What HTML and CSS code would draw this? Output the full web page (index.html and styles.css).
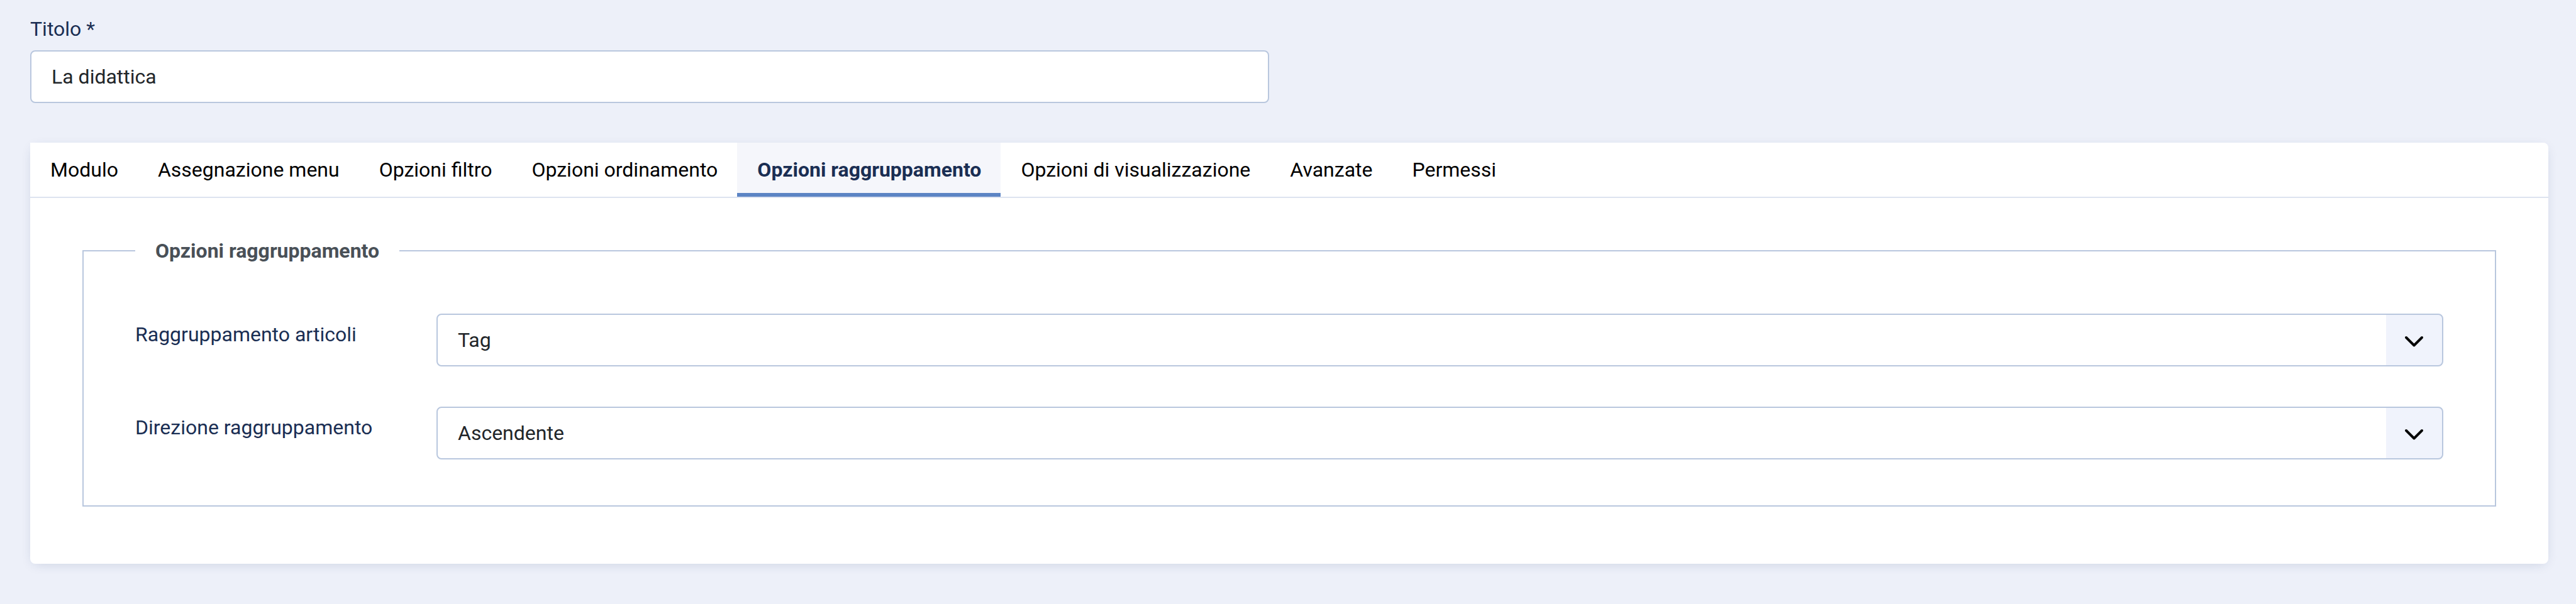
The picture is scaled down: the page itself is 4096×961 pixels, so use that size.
FILE: index.html
```html
<!DOCTYPE html>
<html lang="it">
<head>
<meta charset="utf-8">
<title>La didattica</title>
<link rel="stylesheet" href="styles.css">
</head>
<body>
<form class="page">
  <div class="title-row">
    <div class="title-field">
      <label for="title">Titolo *</label>
      <input class="control" id="title" type="text" value="La didattica">
    </div>
  </div>
  <section class="panel">
    <div class="tabs" role="tablist">
      <button class="tab" type="button" role="tab">Modulo</button>
      <button class="tab" type="button" role="tab">Assegnazione menu</button>
      <button class="tab" type="button" role="tab">Opzioni filtro</button>
      <button class="tab" type="button" role="tab">Opzioni ordinamento</button>
      <button class="tab active" type="button" role="tab" aria-selected="true">Opzioni raggruppamento</button>
      <button class="tab" type="button" role="tab">Opzioni di visualizzazione</button>
      <button class="tab" type="button" role="tab">Avanzate</button>
      <button class="tab" type="button" role="tab">Permessi</button>
    </div>
    <div class="panel-body" role="tabpanel">
      <fieldset class="options">
        <legend>Opzioni raggruppamento</legend>
        <div class="rows">
          <div class="row">
            <label for="grouping">Raggruppamento articoli</label>
            <select class="control select" id="grouping"><option>Tag</option></select>
          </div>
          <div class="row">
            <label for="direction">Direzione raggruppamento</label>
            <select class="control select" id="direction"><option>Ascendente</option></select>
          </div>
        </div>
      </fieldset>
    </div>
  </section>
</form>
</body>
</html>
```
FILE: styles.css
```css
* {
  box-sizing: border-box;
}

body {
  margin: 0;
  background: #edf0f9;
  color: #22262a;
  font: 32px/48px Roboto, "Liberation Sans", sans-serif;
}

.page {
  padding: 22px 44px 64px 48px;
}

label {
  color: #1a2e53;
}

.title-row {
  display: grid;
  grid-template-columns: 1fr 1fr;
  gap: 64px;
  margin-bottom: 63px;
}

.title-field {
  display: flex;
  flex-direction: column;
  gap: 10px;
}

.control {
  width: 100%;
  height: 84px;
  margin: 0;
  padding: 0 32px;
  border: 2px solid #b9c7de;
  border-radius: 8px;
  background-color: #fff;
  color: #22262a;
  font: inherit;
}

.select {
  appearance: none;
  background-image: url("data:image/svg+xml,%3Csvg xmlns='http://www.w3.org/2000/svg' width='89' height='80'%3E%3Crect width='89' height='80' fill='%23f0f3fc'/%3E%3Cpath d='M32 36l12.500 12.500L57 36' fill='none' stroke='%23000' stroke-width='4' stroke-linecap='round' stroke-linejoin='round'/%3E%3C/svg%3E");
  background-position: right center;
  background-repeat: no-repeat;
}

.panel {
  border-radius: 0 8px 8px 8px;
  background: #fff;
  box-shadow: 0 4px 20px -6px rgba(26, 51, 102, 0.2);
}

.tabs {
  display: flex;
  border-bottom: 2px solid #dde3f0;
}

.tab {
  padding: 19px 31px 19px 32px;
  border: 0;
  background: transparent;
  color: #000;
  font: inherit;
  white-space: nowrap;
}

.tab.active {
  background: #f5f6fb;
  box-shadow: inset 0 -6px #5c84c4;
  color: #1a2e53;
  font-weight: 700;
}

.panel-body {
  padding: 60px 83px 91px;
}

.options {
  margin: 0;
  padding: 0 82px 73px;
  border: 2px solid #b9c7de;
}

.options legend {
  padding: 0 32px;
  color: #495057;
  font-weight: 700;
}

.rows {
  display: flex;
  flex-direction: column;
  gap: 64px;
  padding-top: 76px;
}

.row {
  display: grid;
  grid-template-columns: 479px 1fr;
  align-items: start;
}

.row label {
  padding-top: 9px;
}
```
